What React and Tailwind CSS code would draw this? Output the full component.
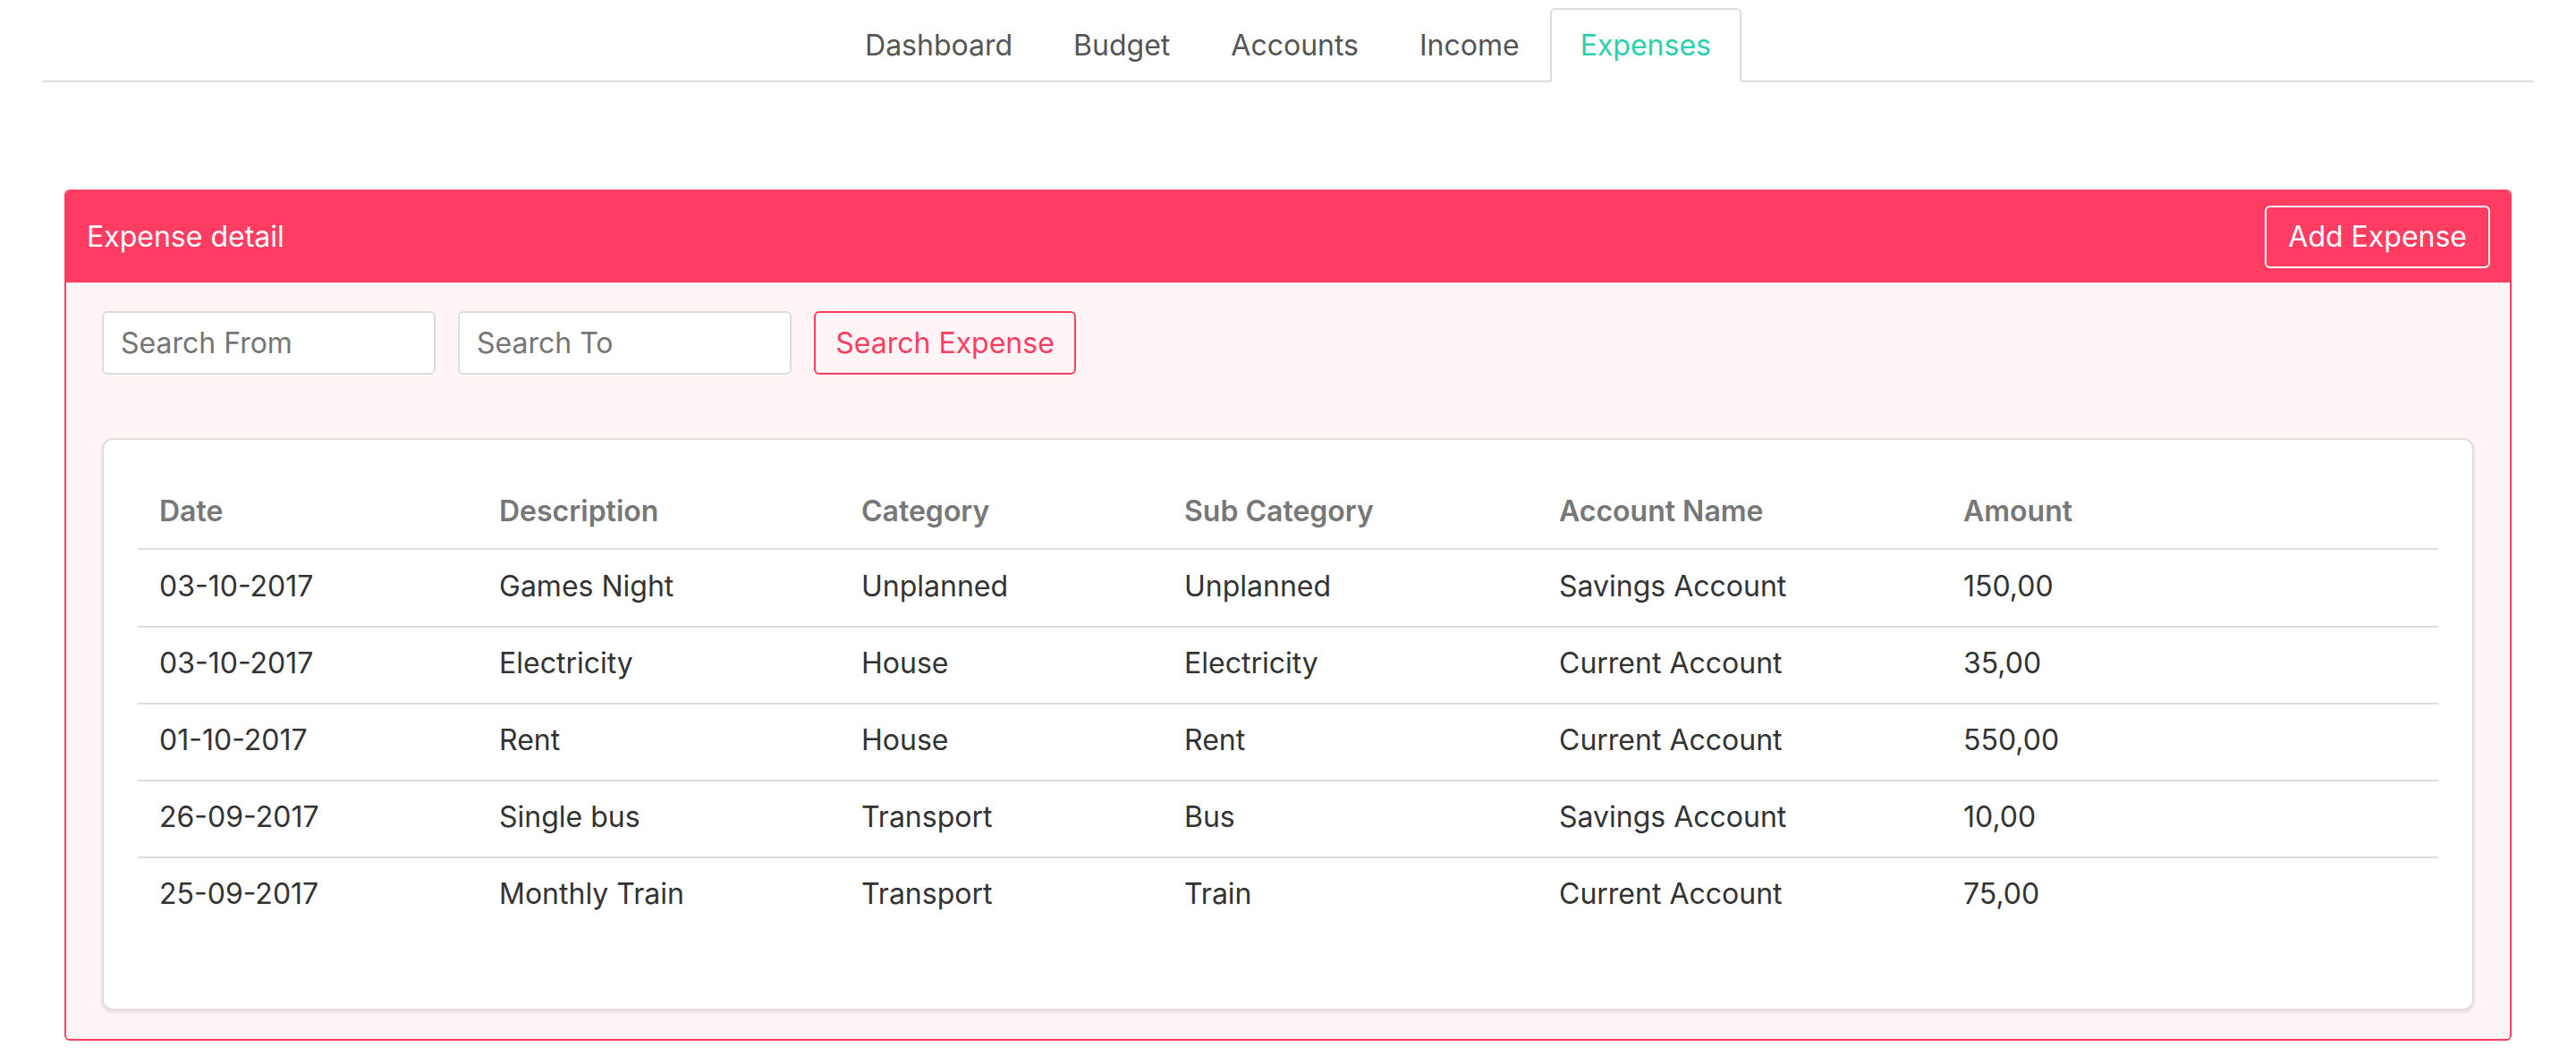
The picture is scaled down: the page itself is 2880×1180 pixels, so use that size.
import React from 'react';

const tabs = ['Dashboard', 'Budget', 'Accounts', 'Income', 'Expenses'];

const columns = [
  { label: 'Date', width: 'w-[380px]' },
  { label: 'Description', width: 'w-[405px]' },
  { label: 'Category', width: 'w-[361px]' },
  { label: 'Sub Category', width: 'w-[419px]' },
  { label: 'Account Name', width: 'w-[452px]' },
  { label: 'Amount', width: '' },
];

const expenses = [
  ['03-10-2017', 'Games Night', 'Unplanned', 'Unplanned', 'Savings Account', '150,00'],
  ['03-10-2017', 'Electricity', 'House', 'Electricity', 'Current Account', '35,00'],
  ['01-10-2017', 'Rent', 'House', 'Rent', 'Current Account', '550,00'],
  ['26-09-2017', 'Single bus', 'Transport', 'Bus', 'Savings Account', '10,00'],
  ['25-09-2017', 'Monthly Train', 'Transport', 'Train', 'Current Account', '75,00'],
];

export default function App() {
  const active = 'Expenses';

  return (
    <div className="h-[1180px] overflow-hidden bg-white font-['Inter','Liberation_Sans',sans-serif] text-[32px] text-[#333333]">
      {/* top tabs */}
      <nav className="mx-[48px] flex justify-center border-b-2 border-[#dddddd] pt-[9px]">
        {tabs.map((tab) => (
          <div
            key={tab}
            className={
              tab === active
                ? '-mb-[2px] flex h-[83px] items-center rounded-t-[6px] border-2 border-[#dddddd] border-b-white bg-white px-[32px] text-[#2bd0ad]'
                : '-mb-[2px] flex h-[83px] items-center border-2 border-transparent px-[32px] text-[#555555]'
            }
          >
            {tab}
          </div>
        ))}
      </nav>

      {/* expense panel */}
      <section className="mx-[72px] mt-[120px] overflow-hidden rounded-[6px] border-2 border-[#ff3d63]">
        <header className="flex h-[102px] items-center justify-between bg-[#ff3d63] pl-[23px] pr-[22px] text-white">
          <span>Expense detail</span>
          <button className="h-[70px] rounded-[6px] border-2 border-white px-[24px] text-white">
            Add Expense
          </button>
        </header>

        <div className="bg-[#fff5f6] px-[40px] pt-[32px] pb-[32px]">
          <div className="flex gap-[25px]">
            <input
              placeholder="Search From"
              className="h-[71px] w-[373px] rounded-[6px] border-2 border-[#dddddd] bg-white px-[19px] text-[#333333] outline-none placeholder:text-[#757575]"
            />
            <input
              placeholder="Search To"
              className="h-[71px] w-[373px] rounded-[6px] border-2 border-[#dddddd] bg-white px-[19px] text-[#333333] outline-none placeholder:text-[#757575]"
            />
            <button className="h-[71px] w-[293px] rounded-[6px] border-2 border-[#ff3d63] text-[#ff3d63]">
              Search Expense
            </button>
          </div>

          <div className="mt-[71px] rounded-[12px] border-2 border-[#e6dede] bg-white px-[38px] pt-[35px] pb-[84px] shadow-[0_2px_4px_rgba(0,0,0,0.12)]">
            <table className="w-full table-fixed border-collapse">
              <thead>
                <tr>
                  {columns.map((col) => (
                    <th
                      key={col.label}
                      className={`${col.width} border-b-2 border-[#dddddd] px-[24px] pt-[22px] pb-[18px] text-left font-semibold leading-[46px] text-[#777777]`}
                    >
                      {col.label}
                    </th>
                  ))}
                </tr>
              </thead>
              <tbody>
                {expenses.map((row, i) => (
                  <tr key={i}>
                    {row.map((cell, j) => (
                      <td
                        key={j}
                        className={
                          i === 0
                            ? 'px-[24px] pt-[18px] pb-[22px] leading-[45px]'
                            : 'border-t-2 border-[#dddddd] px-[24px] pt-[18px] pb-[22px] leading-[44px]'
                        }
                      >
                        {cell}
                      </td>
                    ))}
                  </tr>
                ))}
              </tbody>
            </table>
          </div>
        </div>
      </section>
    </div>
  );
}
